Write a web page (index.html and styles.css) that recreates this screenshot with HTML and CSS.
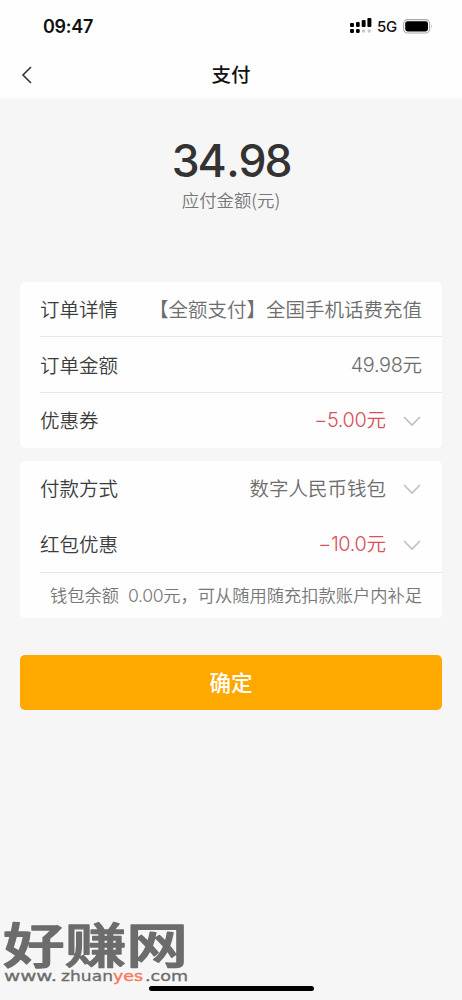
FILE: index.html
```html
<!DOCTYPE html>
<html lang="zh-CN">
<head>
<meta charset="utf-8">
<title>支付</title>
<link rel="stylesheet" href="styles.css">
</head>
<body>
<header class="top">
  <div class="status">
    <span class="time">09:47</span>
    <div class="status-icons">
      <svg class="signal" width="22" height="16" viewBox="0 0 22 16">
        <g fill="#000"><rect x="0" y="5" width="4" height="4" rx="1"/><rect x="6" y="4" width="3.7" height="5" rx="1"/><rect x="11.7" y="2" width="3.9" height="7" rx="1"/><rect x="17.4" y="0" width="4" height="9" rx="1"/><rect x="0" y="11" width="4" height="4" rx="1.3"/><rect x="6" y="11" width="3.7" height="4" rx="1.3"/></g>
        <g fill="#c8c8c8"><circle cx="13.5" cy="13" r="1.7"/><circle cx="19.2" cy="13" r="1.7"/></g>
      </svg>
      <span class="network">5G</span>
      <svg class="battery" width="30" height="15" viewBox="0 0 30 15">
        <rect x=".6" y=".6" width="26" height="13.4" rx="4" fill="#fff" stroke="#aaa" stroke-width="1.1"/>
        <rect x="2.2" y="2.2" width="22.8" height="10.2" rx="2.4"/>
        <path d="M28 5.2q1.5 2.1 0 4.2z" fill="#999"/>
      </svg>
    </div>
  </div>
  <nav class="nav">
    <svg class="back" width="12" height="18" viewBox="0 0 12 18"><path d="M10 1 2 9l8 8" fill="none" stroke="#333" stroke-width="1.6"/></svg>
    <h1 class="title">支付</h1>
  </nav>
</header>
<main class="page">
  <section class="summary">
    <div class="total">34<span class="point">.</span>98</div>
    <div class="caption">应付金额(元)</div>
  </section>
  <section class="card order">
    <div class="row"><span>订单详情</span><span class="value">【全额支付】全国手机话费充值</span></div>
    <div class="row line"><span>订单金额</span><span class="value"><span class="num">49.98</span>元</span></div>
    <div class="row line"><span>优惠券</span><span class="value red"><span class="num">−5.00</span>元</span><svg class="chevron" width="18" height="11" viewBox="0 0 18 11"><path d="m1 1 8 8 8-8"/></svg></div>
  </section>
  <section class="card payment">
    <div class="row"><span>付款方式</span><span class="value">数字人民币钱包</span><svg class="chevron" width="18" height="11" viewBox="0 0 18 11"><path d="m1 1 8 8 8-8"/></svg></div>
    <div class="row"><span>红包优惠</span><span class="value red"><span class="num">−10.0</span>元</span><svg class="chevron" width="18" height="11" viewBox="0 0 18 11"><path d="m1 1 8 8 8-8"/></svg></div>
    <div class="note line"><span>钱包余额</span><span><span class="num">0.00</span>元，可从随用随充扣款账户内补足</span></div>
  </section>
  <button class="confirm">确定</button>
</main>
<svg class="watermark" width="200" height="100" viewBox="0 0 200 100">
  <text class="brand" x="3" y="63" textLength="185" lengthAdjust="spacingAndGlyphs">好赚网</text>
  <text class="url" x="4" y="81" textLength="53" lengthAdjust="spacingAndGlyphs">www.</text>
  <text class="url" x="61" y="81" textLength="52" lengthAdjust="spacingAndGlyphs">zhuan</text>
  <text class="url accent" x="113" y="81" textLength="30" lengthAdjust="spacingAndGlyphs">yes</text>
  <text class="url" x="145" y="81" textLength="43" lengthAdjust="spacingAndGlyphs">.com</text>
</svg>
<div class="home-bar"></div>
</body>
</html>
```
FILE: styles.css
```css
* { box-sizing: border-box; }
body {
  position: relative;
  height: 1000px;
  margin: 0;
  overflow: hidden;
  background: #f6f6f6;
  color: #3c3c3c;
  font-family: "Noto Sans CJK SC", sans-serif;
  font-size: 19.5px;
}
svg { display: block; flex: none; }
.top { height: 99px; background: #fefefe; border-bottom: 1px solid #f9f9f9; }
.status {
  display: flex;
  justify-content: space-between;
  align-items: center;
  height: 52px;
  padding: 0 29px 0 43px;
  color: #111;
  font-family: Inter, sans-serif;
}
.time { font-size: 18px; font-weight: 600; letter-spacing: -.3px; }
.status-icons { display: flex; align-items: center; }
.network { width: 20px; margin: 1px 6px 0 5px; font-size: 15px; font-weight: 450; letter-spacing: -.2px; }
.nav { display: grid; grid-template-columns: 22px 1fr 22px; align-items: center; height: 46px; padding: 0 20px; }
.back { margin: 0 0 0 1px; }
.title { margin: -2px 0 0; color: #111; font-size: 19.5px; font-weight: 500; line-height: 30px; text-align: center; }
.page { padding: 0 20px; }
.summary { height: 183px; padding-top: 35px; text-align: center; }
.total { height: 53px; color: #333; font: 450 44.5px/54px Inter, sans-serif; letter-spacing: -2.1px; }
.point { margin: 0 1px 0 1.6px; }
.caption { color: #777; font-size: 17.4px; line-height: 25px; font-weight: 350; }
.card { background: #fefefe; border-radius: 5px; }
.order { height: 166px; margin-bottom: 13px; }
.payment { height: 157px; }
.row { display: flex; align-items: center; height: 55.4px; padding: 0 20px 1px; line-height: 30px; white-space: nowrap; font-weight: 350; }
.order .row { padding-bottom: 0; }
.order .row:first-child { height: 54.4px; }
.line { margin-left: 20px; border-top: 1px solid #e7e7e7; }
.row.line { padding-left: 0; }
.payment .row:nth-child(2) { height: 55.6px; }
.value { margin-left: auto; color: #6d6d6d; }
.red { color: #d8505a; }
.num { font-family: Inter, sans-serif; font-weight: 350; font-size: 1.02em; letter-spacing: -.35px; }
.chevron { margin: 3px 1px 0 17px; fill: none; stroke: #bfbfbf; stroke-width: 1.6; }
.note { display: flex; justify-content: flex-end; gap: 9px; height: 46px; padding-right: 20px; color: #777; font-size: 17.25px; line-height: 43px; white-space: nowrap; font-weight: 350; }
.confirm {
  display: block;
  width: 100%;
  height: 55px;
  margin-top: 37px;
  padding: 0 0 2px;
  border: 0;
  border-radius: 5px;
  background: #ffa800;
  color: #fff;
  font: 500 21.5px/52px "Noto Sans CJK SC", sans-serif;
}
.watermark { position: absolute; left: 0; bottom: 0; }
.brand { fill: #6c6c6c; stroke: #6c6c6c; stroke-width: 1.4; stroke-linejoin: round; font: 500 48px "Noto Sans CJK SC", sans-serif; }
.url { fill: #6c6c6c; stroke: #6c6c6c; stroke-width: .3; font: 400 14.5px "DejaVu Sans", sans-serif; }
.accent { fill: #f87a5d; stroke: #f87a5d; stroke-width: .4; }
.home-bar { position: absolute; left: 149px; top: 986px; width: 165px; height: 5px; border-radius: 3px; background: #000; }
```
